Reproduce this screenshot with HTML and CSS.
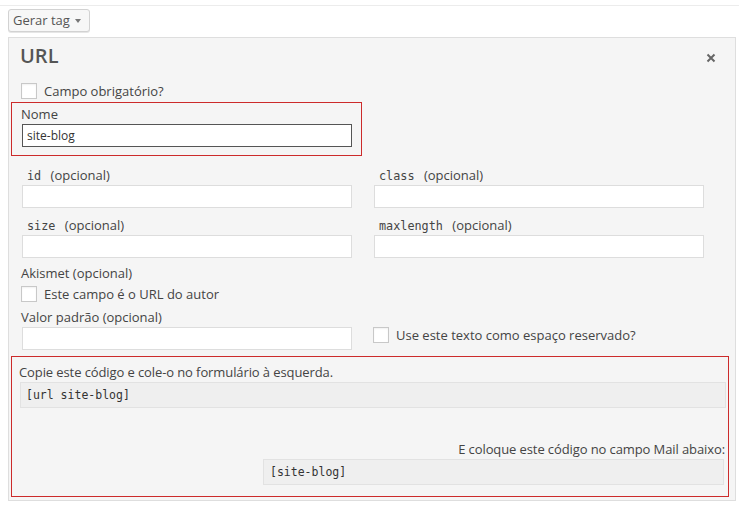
FILE: index.html
```html
<!DOCTYPE html>
<html lang="pt">
<head>
<meta charset="utf-8">
<link rel="stylesheet" href="styles.css">
</head>
<body>
<div class="topline"></div>
<div class="wrap">
  <div class="gen">Gerar tag <span class="caret"></span></div>
  <div class="panel">
    <div class="head">
      <h2>URL</h2>
      <svg class="close" width="10" height="10" viewBox="0 0 10 10"><path d="M1.5 1.5 L8.5 8.5 M8.5 1.5 L1.5 8.5" stroke="#666" stroke-width="2" fill="none"/></svg>
    </div>
    <div class="check req"><span class="box"></span><span>Campo obrigatório?</span></div>
    <div class="hl name">
      <div class="lbl">Nome</div>
      <div class="inp dark">site-blog</div>
    </div>
    <div class="grid">
      <div class="cell"><div class="lbl ind"><code>id</code> (opcional)</div><div class="inp"></div></div>
      <div class="cell"><div class="lbl ind"><code>class</code> (opcional)</div><div class="inp"></div></div>
      <div class="cell"><div class="lbl ind"><code>size</code> (opcional)</div><div class="inp"></div></div>
      <div class="cell"><div class="lbl ind"><code>maxlength</code> (opcional)</div><div class="inp"></div></div>
    </div>
    <div class="lbl side akis">Akismet (opcional)</div>
    <div class="check auth"><span class="box"></span><span>Este campo é o URL do autor</span></div>
    <div class="grid vrow">
      <div class="cell"><div class="lbl out">Valor padrão (opcional)</div><div class="inp"></div></div>
      <div class="cell ph"><div class="check"><span class="box"></span><span>Use este texto como espaço reservado?</span></div></div>
    </div>
    <div class="hl codes">
      <div class="ctext">Copie este código e cole-o no formulário à esquerda.</div>
      <div class="code wide">[url site-blog]</div>
      <div class="ctext right">E coloque este código no campo Mail abaixo:</div>
      <div class="code narrow">[site-blog]</div>
    </div>
  </div>
</div>
</body>
</html>
```
FILE: styles.css
```css
* { box-sizing: border-box; }
body {
  margin: 0;
  background: #fff;
  font-family: "Open Sans", "Liberation Sans", sans-serif;
  font-size: 13px;
  color: #444;
}
.topline {
  height: 6px;
  border-bottom: 1px solid #ececec;
}
.wrap {
  padding: 3px 4px 0 8px;
}
.gen {
  display: inline-flex;
  align-items: center;
  height: 23px;
  padding: 0 8px 0 4px;
  border: 1px solid #d2d2d2;
  border-radius: 3px;
  background: #f7f7f7;
  color: #555;
  line-height: 21px;
  box-shadow: 0 1px 0 #e6e6e6;
}
.caret {
  display: inline-block;
  margin-left: 5px;
  margin-top: 1px;
  width: 0;
  height: 0;
  border-left: 3.5px solid transparent;
  border-right: 3.5px solid transparent;
  border-top: 4px solid #777;
}
.panel {
  margin-top: 5px;
  width: 728px;
  background: #f5f5f5;
  border: 1px solid #dedede;
  padding: 3px 6px 3px 2px;
}
.head {
  display: flex;
  align-items: center;
  justify-content: space-between;
  padding: 0 13px 0 9px;
  height: 30px;
}
.head h2 {
  margin: 0;
  font-size: 20px;
  line-height: 30px;
  font-weight: 600;
  color: #555;
}
.close { margin-top: 4px; }
.check {
  display: flex;
  align-items: center;
  gap: 7px;
  line-height: 18px;
}
.box {
  width: 16px;
  height: 16px;
  background: #fff;
  border: 1px solid #c8c8c8;
  box-shadow: inset 0 1px 2px rgba(0,0,0,0.06);
  flex: none;
}
.req {
  margin-top: 11px;
  padding-left: 10px;
  height: 18px;
}
.hl {
  border: 1px solid #cc2b2b;
}
.name {
  margin-top: 2px;
  width: 351px;
  padding: 2px 9px 8px 9px;
}
.lbl {
  height: 19px;
  line-height: 19px;
  color: #444;
  white-space: nowrap;
}
.inp {
  height: 23px;
  width: 330px;
  background: #fff;
  border: 1px solid #ddd;
  font-size: 12px;
  line-height: 21px;
  padding: 0 4px;
  color: #333;
}
.name .inp { margin-left: 1px; }
.dark { border-color: #555; }
.grid {
  display: grid;
  grid-template-columns: 330px 330px;
  column-gap: 22px;
  row-gap: 8px;
  margin: 10px 0 0 11px;
}
.ind { padding-left: 5px; }
code {
  font-family: "DejaVu Sans Mono", "Liberation Mono", monospace;
  font-size: 11.8px;
  line-height: 1;
  margin-right: 6px;
  color: #444;
}
.akis {
  margin-top: 6px;
  padding-left: 10px;
}
.auth {
  height: 20px;
  padding-left: 10px;
  margin-top: 1px;
}
.vrow {
  margin-top: 4px;
  align-items: end;
}
.out { margin-left: -1px; }
.ph {
  padding-bottom: 6px;
  margin-left: -1px;
}
.codes {
  margin-top: 6px;
  padding: 6px 2px 11px 7px;
}
.ctext {
  height: 19px;
  line-height: 19px;
  color: #444;
  letter-spacing: -0.1px;
}
.right {
  text-align: right;
  margin-top: 32px;
  padding-right: 1px;
}
.code {
  height: 26px;
  background: #efefef;
  border: 1px solid #e2e2e2;
  font-family: "DejaVu Sans Mono", "Liberation Mono", monospace;
  font-size: 11.5px;
  line-height: 24px;
  color: #333;
}
.wide {
  margin-left: 1px;
  padding-left: 5px;
}
.narrow {
  width: 461px;
  margin-left: auto;
  margin-right: 2px;
  padding-left: 6px;
}
```
